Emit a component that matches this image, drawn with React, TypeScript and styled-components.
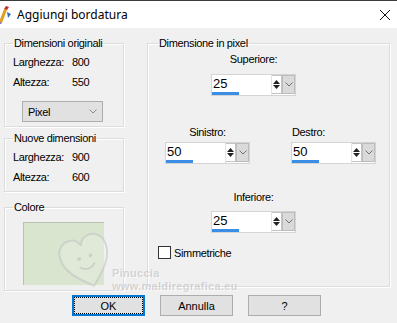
import styled, { createGlobalStyle } from "styled-components";

const GlobalStyle = createGlobalStyle`
  body {
    margin: 0;
    background: #f0f0f0;
    font-family: "Liberation Sans", Arial, sans-serif;
    font-size: 11px;
    letter-spacing: -0.35px;
    color: #000;
  }
`;

const Window = styled.div`
  position: relative;
  width: 397px;
  height: 323px;
  overflow: hidden;
  background: #f0f0f0;
`;

const TitleBar = styled.div`
  height: 27px;
  border-top: 1px solid #3c3c3c;
  background: #fff;
  display: flex;
  align-items: center;
`;

const TitleText = styled.span`
  margin-left: 5px;
  font-family: "Noto Sans", "Open Sans", sans-serif;
  font-size: 12px;
  letter-spacing: 0;
  flex: 1;
`;

const CloseBox = styled.div`
  width: 12px;
  height: 12px;
  margin-right: 6px;
  display: flex;
`;

const Body = styled.div`
  display: flex;
  gap: 23px;
  padding: 9px 0 0 4px;
`;

const Column = styled.div<{ $w: number }>`
  width: ${(p) => p.$w}px;
  display: flex;
  flex-direction: column;
`;

const Group = styled.fieldset<{ $mt?: number; $pb?: number }>`
  margin: ${(p) => p.$mt ?? 0}px 0 0 0;
  padding: 2px 4px ${(p) => p.$pb ?? 4}px 8px;
  border: 1px solid #dcdcdc;
  box-shadow: inset 1px 1px 0 #fff, 1px 1px 0 #fff;
  min-width: 0;
`;

const PixelGroup = styled(Group)`
  padding-left: 10px;
  padding-right: 0;
`;

const Legend = styled.legend`
  margin-left: 0;
  padding: 0 1px;
  line-height: 13px;
  font-size: 11px;
`;

const InfoRow = styled.div`
  display: flex;
  height: 20px;
  align-items: center;
`;

const InfoLabel = styled.span`
  width: 59px;
`;

const Select = styled.div`
  margin: 9px 0 0 9px;
  width: 69px;
  height: 19px;
  background: #e1e1e1;
  border: 1px solid #adadad;
  display: flex;
  align-items: center;
  justify-content: space-between;
  padding: 0 5px;
`;

const Swatch = styled.div`
  margin: 6px 0 0 10px;
  width: 80px;
  height: 62px;
  background: #d9e5cf;
  border-top: 1px solid #b9c2b1;
  border-left: 1px solid #b9c2b1;
`;

const Field = styled.div<{ $ml?: number; $mt?: number; $gap: number }>`
  display: flex;
  flex-direction: column;
  gap: ${(p) => p.$gap}px;
  margin: ${(p) => p.$mt ?? 0}px 0 0 ${(p) => p.$ml ?? 0}px;
  width: 85px;
`;

const FieldLabel = styled.span<{ $align: "center" | "left" }>`
  line-height: 13px;
  text-align: ${(p) => p.$align};
  padding-left: ${(p) => (p.$align === "left" ? 1 : 0)}px;
`;

const FieldRow = styled.div`
  display: flex;
  gap: 41px;
  margin: 30px 0 0 7px;
`;

const Spin = styled.div`
  display: flex;
  height: 22px;
  border: 1px solid #d4d4d4;
  box-sizing: border-box;
  background: #fff;
`;

const SpinInput = styled.div`
  width: 60px;
  display: flex;
  flex-direction: column;
  border-right: 1px solid #e3e3e3;
`;

const SpinValue = styled.span`
  font-size: 13px;
  letter-spacing: 0;
  line-height: 17px;
  padding-left: 1px;
`;

const SpinBar = styled.div`
  margin-top: auto;
  width: 27px;
  height: 3px;
  background: #3b8ee6;
`;

const Arrows = styled.div`
  width: 10px;
  display: flex;
  flex-direction: column;
  justify-content: center;
  align-items: center;
  gap: 1px;
  height: 19px;
  border: 1px solid #c4c4c4;
  border-left: none;
  box-sizing: border-box;
`;

const Drop = styled.div`
  width: 13px;
  height: 19px;
  background: #dadada;
  border: 1px solid #bcbcbc;
  box-sizing: border-box;
  display: flex;
  align-items: center;
  justify-content: center;
`;

const CheckRow = styled.label`
  display: flex;
  align-items: center;
  gap: 3px;
  margin-top: 13px;
`;

const CheckBox = styled.span`
  width: 11px;
  height: 11px;
  border: 1px solid #333;
  background: #fff;
`;

const Footer = styled.div`
  display: flex;
  gap: 15px;
  padding: 4px 0 0 72px;
`;

const Button = styled.div<{ $focus?: boolean }>`
  width: 73px;
  height: 21px;
  box-sizing: border-box;
  background: #e1e1e1;
  border: ${(p) => (p.$focus ? "2px solid #0078d7" : "1px solid #adadad")};
  display: flex;
  align-items: center;
  justify-content: center;
  font-size: 11px;
  letter-spacing: 0;
  padding: ${(p) => (p.$focus ? "1px" : "0")};
`;

const FocusRect = styled.span`
  flex: 1;
  align-self: stretch;
  display: flex;
  align-items: center;
  justify-content: center;
  outline: 1px dotted #000;
`;

const Watermark = styled.div`
  position: absolute;
  left: 58px;
  top: 229px;
  display: flex;
  align-items: flex-end;
  pointer-events: none;
`;

const MarkText = styled.div`
  display: flex;
  flex-direction: column;
  margin-left: -2px;
  font-weight: bold;
  font-size: 11px;
  letter-spacing: 0.3px;
  line-height: 13px;
  color: rgba(170, 170, 170, 0.45);
  text-shadow: 1px 1px 0 rgba(255, 255, 255, 0.6);
`;

function Chevron({ color = "#606060" }: { color?: string }) {
  return (
    <svg width="8" height="5" viewBox="0 0 8 5">
      <path d="M0.5 0.5 L4 4 L7.5 0.5" fill="none" stroke={color} strokeWidth="1" />
    </svg>
  );
}

function SpinField({ value }: { value: string }) {
  return (
    <Spin>
      <SpinInput>
        <SpinValue>{value}</SpinValue>
        <SpinBar />
      </SpinInput>
      <Arrows>
        <svg width="7" height="4" viewBox="0 0 7 4">
          <path d="M0 4 L3.5 0 L7 4 Z" fill="#222" />
        </svg>
        <svg width="7" height="4" viewBox="0 0 7 4">
          <path d="M0 0 L3.5 4 L7 0 Z" fill="#222" />
        </svg>
      </Arrows>
      <Drop>
        <Chevron color="#707070" />
      </Drop>
    </Spin>
  );
}

export default function App() {
  return (
    <>
      <GlobalStyle />
      <Window>
        <TitleBar>
          <svg width="14" height="18" viewBox="0 0 14 18" style={{ marginLeft: -2 }}>
            <path d="M1 16 L6 3 L9 4 L4 17 Z" fill="#e0a020" />
            <path d="M6 3 L9 4 L11 1 L8 0 Z" fill="#c03030" />
            <path d="M1 16 L4 17 L2 18 Z" fill="#6040a0" />
            <path d="M9 6 L13 8 L10 12 Z" fill="#3070c0" />
          </svg>
          <TitleText>Aggiungi bordatura</TitleText>
          <CloseBox>
            <svg width="12" height="12" viewBox="0 0 12 12">
              <path d="M1 1 L11 11 M11 1 L1 11" stroke="#111" strokeWidth="1" />
            </svg>
          </CloseBox>
        </TitleBar>
        <Body>
          <Column $w={120}>
            <Group>
              <Legend>Dimensioni originali</Legend>
              <InfoRow>
                <InfoLabel>Larghezza:</InfoLabel>800
              </InfoRow>
              <InfoRow>
                <InfoLabel>Altezza:</InfoLabel>550
              </InfoRow>
              <Select>
                <span>Pixel</span>
                <Chevron color="#8a8a8a" />
              </Select>
            </Group>
            <Group $mt={5}>
              <Legend>Nuove dimensioni</Legend>
              <InfoRow>
                <InfoLabel>Larghezza:</InfoLabel>900
              </InfoRow>
              <InfoRow>
                <InfoLabel>Altezza:</InfoLabel>600
              </InfoRow>
            </Group>
            <Group $mt={9} $pb={5}>
              <Legend>Colore</Legend>
              <Swatch />
            </Group>
          </Column>
          <Column $w={243}>
            <PixelGroup $pb={27}>
              <Legend>Dimensione in pixel</Legend>
              <Field $ml={53} $mt={1} $gap={8}>
                <FieldLabel $align="center">Superiore:</FieldLabel>
                <SpinField value="25" />
              </Field>
              <FieldRow>
                <Field $gap={3}>
                  <FieldLabel $align="center">Sinistro:</FieldLabel>
                  <SpinField value="50" />
                </Field>
                <Field $gap={3}>
                  <FieldLabel $align="left">Destro:</FieldLabel>
                  <SpinField value="50" />
                </Field>
              </FieldRow>
              <Field $ml={53} $mt={27} $gap={7}>
                <FieldLabel $align="center">Inferiore:</FieldLabel>
                <SpinField value="25" />
              </Field>
              <CheckRow>
                <CheckBox />
                Simmetriche
              </CheckRow>
            </PixelGroup>
          </Column>
        </Body>
        <Footer>
          <Button $focus>
            <FocusRect>OK</FocusRect>
          </Button>
          <Button>Annulla</Button>
          <Button>?</Button>
        </Footer>
        <Watermark>
          <svg width="56" height="64" viewBox="0 0 56 64">
            <g transform="rotate(-18 28 32)" opacity="0.55">
              <path
                d="M28 58 C14 46 4 36 4 22 C4 12 12 6 20 8 C24 9 27 12 28 16 C29 12 32 9 36 8 C44 6 52 12 52 22 C52 36 42 46 28 58 Z"
                fill="rgba(255,255,255,0.35)"
                stroke="#c4c4c4"
                strokeWidth="2"
              />
              <circle cx="22" cy="28" r="2" fill="#c4c4c4" />
              <circle cx="34" cy="28" r="2" fill="#c4c4c4" />
              <path d="M20 36 Q28 44 36 36" fill="none" stroke="#c4c4c4" strokeWidth="2" />
            </g>
          </svg>
          <MarkText>
            <span>Pinuccia</span>
            <span>www.maldiregrafica.eu</span>
          </MarkText>
        </Watermark>
      </Window>
    </>
  );
}
